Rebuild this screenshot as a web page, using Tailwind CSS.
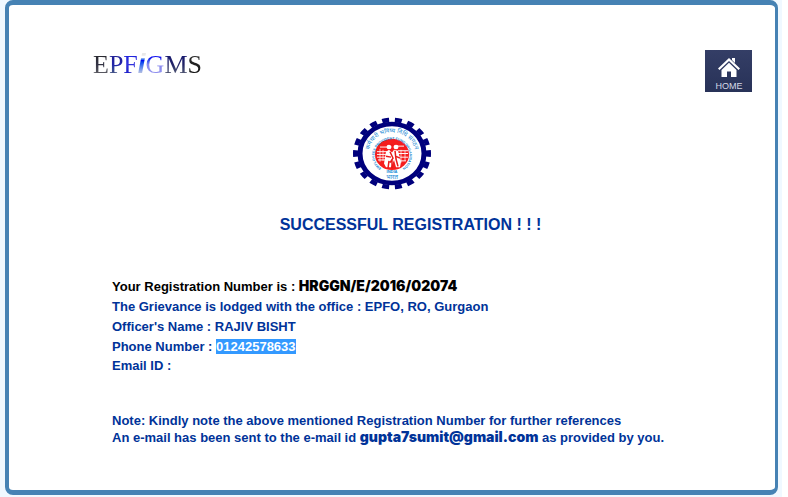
<!DOCTYPE html>
<html lang="en">
<head>
<meta charset="utf-8">
<meta name="viewport" content="width=device-width, initial-scale=1">
<title>EPFiGMS - Successful Registration</title>
<script src="https://cdn.jsdelivr.net/npm/@tailwindcss/browser@4"></script>
</head>
<body class="bg-white font-['Liberation_Sans',Arial,sans-serif]">
<div class="mr-1.5 min-h-screen bg-[#f0f8ff] pr-1 pb-0.5 pl-[5px] flex">
<main class="flex-1 rounded-lg border-[4px] border-r-[3px] border-y-[5px] border-[#4682b4] bg-white">
  <header class="flex items-start justify-between pt-[45px] pr-[23px] pl-[84px]">
    <h1 class="font-['Liberation_Serif','Times_New_Roman',serif] text-[26px] leading-7 text-transparent"><span class="bg-linear-to-b from-[#222] via-[#333344] to-[#777] bg-clip-text">E</span><span class="bg-linear-to-b from-[#222288] via-[#2222aa] to-[#666] bg-clip-text">P</span><span class="bg-linear-to-b from-[#1111dd] via-[#3333dd] to-[#1111bb] bg-clip-text">F</span><em class="bg-linear-to-b from-[#e8e8e8] from-30% via-[#0000ee] via-40% to-[#ccccdd] to-85% bg-clip-text font-['Liberation_Sans',Arial,sans-serif] text-[28px] leading-7 font-black">i</em><span class="bg-linear-to-b from-[#1111ee] from-30% via-[#8888ee] to-[#9999ee] bg-clip-text">G</span><span class="bg-linear-to-b from-[#111177] via-[#222266] to-[#777] bg-clip-text">M</span><span class="bg-linear-to-b from-[#333] to-[#111] bg-clip-text">S</span></h1>
    <a href="#" class="flex h-[42px] w-[47px] flex-col items-center bg-linear-to-b from-[#343e66] to-[#283258] pt-[7px] pl-px text-[9px] leading-4 text-[#d5d9e6]">
      <svg class="h-[21px] w-[22px] shrink-0" viewBox="0 0 22 21" fill="#fff" aria-hidden="true">
        <path d="M11 1 22 11.500 20.500 13 11 4 1.500 13 0 11.500Z"/>
        <path d="M14 1h3v5l-3-3Z"/>
        <path d="M11 5.700 18.500 13v7H13v-5.500H9V20H3.500v-7Z"/>
      </svg>
      HOME
    </a>
  </header>
  <section class="flex flex-col items-center pt-[25px] pl-[37px]">
    <div class="pr-[38px]">
    <svg class="h-[73px] w-[78px]" viewBox="0 0 78 73" role="img" aria-label="Employees' Provident Fund Organisation emblem">
      <defs>
        <path id="outerArc" d="M16 36a23 20.500 0 1 1 46 0"/>
        <path id="innerArc" d="M28 51a17.500 16 0 1 1 22 0"/>
      </defs>
      <g transform="translate(39 36.500) scale(1 .92)">
        <circle r="36.500" fill="none" stroke="#00007c" stroke-width="5" pathLength="36" stroke-dasharray="1.100 .9" transform="rotate(-5.500)"/>
        <circle r="32" fill="#fff" stroke="#00007c" stroke-width="5"/>
        <circle cy="1" r="17" fill="#f51d1d"/>
        <g fill="none" stroke="#fff">
          <path d="M-15-2h10M-15 1h10M-15 4h10M-14 7h8M6-3h10M6 0h10M7 4h9M8 8h6M-12-7H-2M4-8h8" stroke-width="1"/>
          <path d="M-12-5v14M-9-4v12M9-4v14M13-3v11" stroke-width=".7"/>
        </g>
        <g fill="#fff">
          <circle cx="-3" cy="-7" r="2.500"/><circle cx="4" cy="-7" r="2.500"/>
          <path d="M-8 11-6-2l3-2 3 3 2-3 4 1 3 12-1 6H4l-2-8-3 8h-5Z"/>
        </g>
        <path d="M-2-2 1 5l-3 5M3-3l1 9 2 8M-6 3l5 1M4 3l4 2M-3 8l-1 8M0 6v10M-2-10l3 1" fill="none" stroke="#e81919" stroke-width="1.500"/>
      </g>
      <g fill="#1687d4">
        <text font-size="6" font-family="'Noto Sans Devanagari','Noto Sans',sans-serif"><textPath href="#outerArc" startOffset="50%" text-anchor="middle">कर्मचारी भविष्य निधि संगठन</textPath></text>
        <text font-size="3.500" font-weight="700"><textPath href="#innerArc" startOffset="50%" text-anchor="middle">EMPLOYEES PROVIDENT FUND ORGANISATION</textPath></text>
        <text x="39" y="56" font-size="4" font-weight="700" text-anchor="middle">INDIA</text>
        <text x="39" y="62" font-size="6" text-anchor="middle" font-family="'Noto Sans Devanagari','Noto Sans',sans-serif">भारत</text>
      </g>
    </svg>
    </div>
    <h2 class="pt-[25px] text-base leading-5 font-bold text-[#003399]">SUCCESSFUL REGISTRATION ! ! !</h2>
  </section>
  <section class="pr-10 pl-[103px] pt-[42px] text-[13px] leading-5 font-bold text-[#003399]">
    <p class="text-black">Your Registration Number is : <strong class="font-[Inter,sans-serif] text-[14px] leading-none font-black">HRGGN/E/2016/02074</strong></p>
    <p>The Grievance is lodged with the office : EPFO, RO, Gurgaon</p>
    <p>Officer's Name : RAJIV BISHT</p>
    <p class="leading-[19px]">Phone Number : <mark class="bg-[#3399ff] text-white">01242578633</mark></p>
    <p class="leading-[19px]">Email ID :</p>
    <div class="pt-[37px] leading-[17px]">
      <p>Note: Kindly note the above mentioned Registration Number for further references</p>
      <p>An e-mail has been sent to the e-mail id <strong class="font-[Inter,sans-serif] text-[14px] leading-none font-black">gupta7sumit@gmail.com</strong> as provided by you.</p>
    </div>
  </section>
</main>
</div>
</body>
</html>
